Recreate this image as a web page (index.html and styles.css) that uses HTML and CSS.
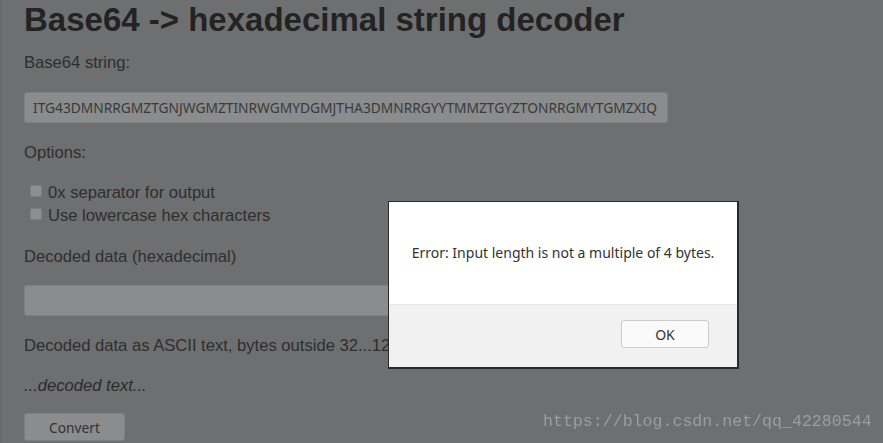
FILE: index.html
```html
<!DOCTYPE html>
<html lang="en">
<head>
  <meta charset="UTF-8" />
  <meta name="viewport" content="width=device-width, initial-scale=1">
  <title>Base64 -> hexadecimal string decoder</title>
  <link rel="stylesheet" href="styles.css">
</head>
<body>
  <div class="page">
    <h1>Base64 -&gt; hexadecimal string decoder</h1>
    <p class="label first">Base64 string:</p>
    <input type="text" class="field" value="ITG43DMNRRGMZTGNJWGMZTINRWGMYDGMJTHA3DMNRRGYYTMMZTGYZTONRRGMYTGMZXIQ">

    <p class="label after-field">Options:</p>
    <div class="options">
      <label class="option"><span class="box"></span>0x separator for output</label>
      <label class="option"><span class="box"></span>Use lowercase hex characters</label>
    </div>

    <p class="label after-options">Decoded data (hexadecimal)</p>
    <input type="text" class="field output" value="">

    <p class="label after-output">Decoded data as ASCII text, bytes outside 32...126 are shown as dots</p>
    <p class="decoded">...decoded text...</p>

    <button class="convert">Convert</button>
  </div>

  <!-- alert dialog on top of the dimmed page -->
  <div class="overlay">
    <div class="dialog">
      <div class="dialog-body">Error: Input length is not a multiple of 4 bytes.</div>
      <div class="dialog-foot">
        <button class="ok">OK</button>
      </div>
    </div>
  </div>

  <div class="watermark">https://blog.csdn.net/qq_42280544</div>
</body>
</html>
```

FILE: styles.css
```css
/* page as seen behind the modal: everything is dimmed */
html, body {
  margin: 0;
  height: 100%;
  overflow: hidden;
}
body {
  background: #6e6f70;
  color: #2b2b2b;
  font-family: "Liberation Sans", Arial, sans-serif;
  border-left: 2px solid #666768;
}
.page {
  padding: 0 22px;
}
h1 {
  font-size: 33px;
  font-weight: bold;
  color: #232323;
  margin: 0;
  line-height: 40px;
}
.label {
  font-size: 16.6px;
  margin: 0;
  line-height: 20px;
  color: #2e2e2e;
}
.label.first { margin-top: 13px; }
.label.after-field { margin-top: 20px; }
.label.after-options { margin-top: 20px; }
.label.after-output { margin-top: 20px; }
.field {
  display: block;
  box-sizing: border-box;
  width: 644px;
  height: 31px;
  margin: 19px 0 0 0;
  padding: 0 8px;
  border: 1px solid #7f8081;
  border-radius: 3px;
  background: #8b8c8d;
  color: #3a3a3a;
  font-family: "Noto Sans", "Open Sans", sans-serif;
  font-size: 13.75px;
  outline: none;
}
.field.output { margin-top: 18px; }
.options {
  margin: 18px 0 0 6px;
}
.option {
  display: flex;
  align-items: center;
  font-size: 16.6px;
  line-height: 23px;
  color: #2e2e2e;
}
.box {
  width: 10px;
  height: 10px;
  border: 1px solid #7c7d7e;
  background: #8e8f90;
  border-radius: 2px;
  margin: 0 6px 3px 0;
}
.decoded {
  font-size: 16.6px;
  font-style: italic;
  margin: 20px 0 0 0;
  line-height: 20px;
}
.convert {
  display: block;
  width: 101px;
  height: 28px;
  margin: 17px 0 0 0;
  border: 1px solid #7d7e7f;
  border-radius: 3px;
  background: #8b8c8d;
  color: #333;
  font-family: "Noto Sans", "Open Sans", sans-serif;
  font-size: 13.75px;
}
.overlay {
  position: fixed;
  inset: 0;
}
.dialog {
  position: absolute;
  left: 388px;
  top: 201px;
  width: 348px;
  background: #fff;
  border: 1px solid #2a2a2a;
  border-right-width: 2px;
  border-bottom-width: 2px;
}
.dialog-body {
  height: 101px;
  display: flex;
  align-items: center;
  justify-content: center;
  font-family: "Noto Sans", "Open Sans", sans-serif;
  font-size: 14px;
  color: #333;
  border-bottom: 1px solid #e6e6e6;
  padding-bottom: 1px;
}
.dialog-foot {
  background: #f1f1f1;
  height: 62px;
  display: flex;
  justify-content: flex-end;
  align-items: center;
  padding-right: 28px;
}
.ok {
  width: 88px;
  height: 28px;
  margin-top: -4px;
  background: #fafafa;
  border: 1px solid #cdcdcd;
  border-radius: 3px;
  font-family: "Noto Sans", "Open Sans", sans-serif;
  font-size: 14px;
  color: #333;
}
.watermark {
  position: fixed;
  left: 543px;
  top: 412px;
  font-family: "Liberation Mono", monospace;
  font-size: 16.6px;
  color: #9c9d9e;
}
```
